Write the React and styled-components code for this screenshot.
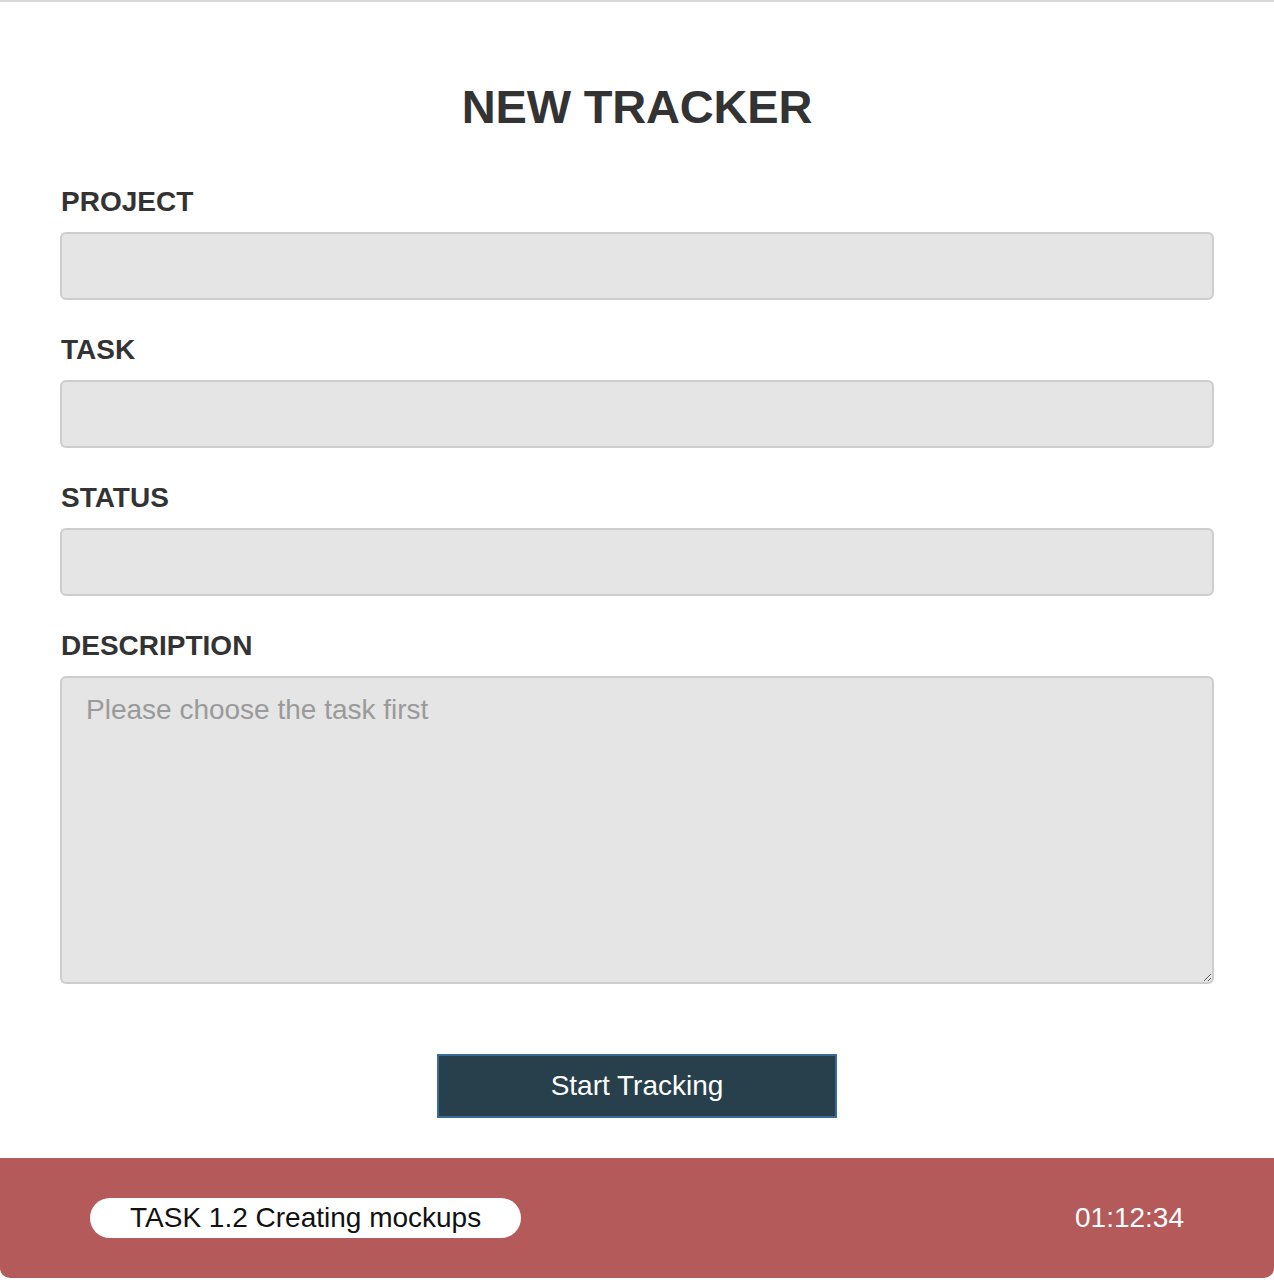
import styled, { createGlobalStyle } from "styled-components";

const Global = createGlobalStyle`
  html, body {
    margin: 0;
    padding: 0;
    background: #ffffff;
    font-family: "Liberation Sans", Arial, Helvetica, sans-serif;
  }
  * { box-sizing: border-box; }
`;

const Page = styled.div`
  border-top: 2px solid #d8d8d8;
  min-height: 1280px;
  display: flex;
  flex-direction: column;
`;

const Form = styled.form`
  padding: 77px 60px 40px 60px;
  display: flex;
  flex-direction: column;
`;

const Title = styled.h1`
  margin: 0 0 51px 0;
  font-size: 47px;
  line-height: 56px;
  font-weight: 700;
  color: #333333;
  text-align: center;
  letter-spacing: -0.2px;
`;

const Field = styled.div`
  display: flex;
  flex-direction: column;
  gap: 14px;
  margin-bottom: 34px;
`;

const Label = styled.label`
  font-size: 28px;
  line-height: 32px;
  font-weight: 700;
  color: #333333;
  padding-left: 1px;
`;

const Input = styled.input`
  width: 100%;
  height: 68px;
  background: #e5e5e5;
  border: 2px solid #cdcdcd;
  border-radius: 6px;
  font-family: inherit;
  font-size: 28px;
  padding: 0 24px;
  outline: none;
`;

const TextArea = styled.textarea`
  width: 100%;
  height: 308px;
  background: #e5e5e5;
  border: 2px solid #cdcdcd;
  border-radius: 6px;
  font-family: inherit;
  font-size: 28px;
  line-height: 32px;
  padding: 16px 24px;
  outline: none;
  resize: vertical;
  display: block;

  &::placeholder {
    color: #9a9a9a;
  }
`;

const Actions = styled.div`
  display: flex;
  justify-content: center;
  margin-top: 36px;
`;

const Button = styled.button`
  width: 400px;
  height: 64px;
  background: #283f4c;
  border: 2px solid #3a6c99;
  color: #ffffff;
  font-family: inherit;
  font-size: 28px;
  cursor: pointer;
`;

const Footer = styled.footer`
  height: 120px;
  background: #b55a5a;
  border-radius: 0 0 10px 10px;
  display: flex;
  align-items: center;
  justify-content: space-between;
  padding: 0 90px;
`;

const TaskPill = styled.div`
  height: 40px;
  background: #ffffff;
  border-radius: 20px;
  padding: 0 40px;
  display: flex;
  align-items: center;
  font-size: 28px;
  color: #111111;
`;

const Timer = styled.div`
  font-size: 28px;
  color: #ffffff;
`;

export default function App() {
  return (
    <Page>
      <Global />
      <Form onSubmit={(e) => e.preventDefault()}>
        <Title>NEW TRACKER</Title>
        <Field>
          <Label>PROJECT</Label>
          <Input />
        </Field>
        <Field>
          <Label>TASK</Label>
          <Input />
        </Field>
        <Field>
          <Label>STATUS</Label>
          <Input />
        </Field>
        <Field>
          <Label>DESCRIPTION</Label>
          <TextArea placeholder="Please choose the task first" />
        </Field>
        <Actions>
          <Button type="submit">Start Tracking</Button>
        </Actions>
      </Form>
      <Footer>
        <TaskPill>TASK 1.2 Creating mockups</TaskPill>
        <Timer>01:12:34</Timer>
      </Footer>
    </Page>
  );
}
